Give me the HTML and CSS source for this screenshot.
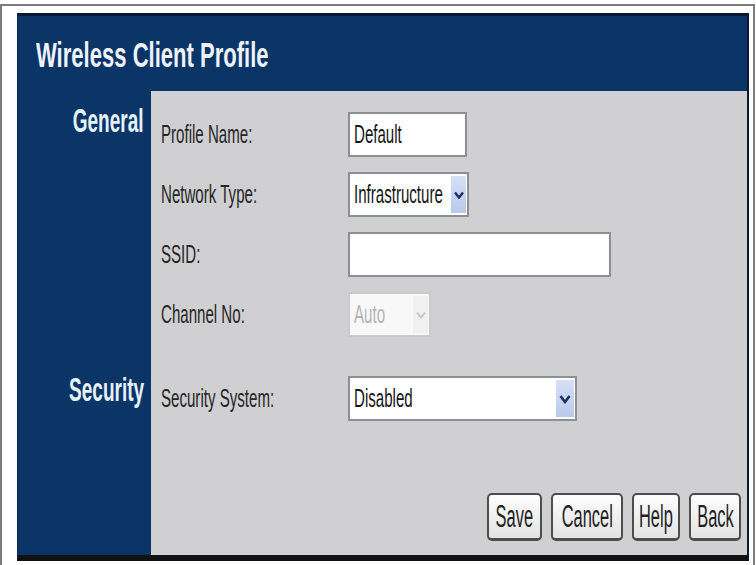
FILE: index.html
```html
<!DOCTYPE html>
<html lang="en">
<head>
    <meta charset="UTF-8">
    <meta name="viewport" content="width=device-width, initial-scale=1.0">
    <title>Wireless Client Profile</title>
    <link rel="stylesheet" href="styles.css">
</head>
<body>

    <div class="frame">
        <div class="panel">
            <div class="title"><span>Wireless Client Profile</span></div>

            <!-- Profile settings -->
            <div class="section general">
                <div class="side-head"><span>General</span></div>
                <div class="group">
                    <div class="row">
                        <div class="label"><span>Profile Name:</span></div>
                        <div class="field w-name"><span>Default</span></div>
                    </div>
                    <div class="row">
                        <div class="label"><span>Network Type:</span></div>
                        <div class="field select w-type">
                            <span>Infrastructure</span>
                            <div class="chev">
                                <svg width="10" height="8" viewBox="0 0 10 8"><polyline points="1,1.5 5,6.5 9,1.5" fill="none" stroke="#1d2f63" stroke-width="2.4"/></svg>
                            </div>
                        </div>
                    </div>
                    <div class="row">
                        <div class="label"><span>SSID:</span></div>
                        <div class="field w-ssid"></div>
                    </div>
                    <div class="row">
                        <div class="label"><span>Channel No:</span></div>
                        <div class="field select disabled w-channel">
                            <span>Auto</span>
                            <div class="chev">
                                <svg width="10" height="8" viewBox="0 0 10 8"><polyline points="1,1.5 5,6.5 9,1.5" fill="none" stroke="#c4c4c4" stroke-width="2"/></svg>
                            </div>
                        </div>
                    </div>
                </div>
            </div>

            <!-- Security settings and actions -->
            <div class="section security">
                <div class="side-head"><span>Security</span></div>
                <div class="group">
                    <div class="row">
                        <div class="label"><span>Security System:</span></div>
                        <div class="field select w-sec">
                            <span>Disabled</span>
                            <div class="chev wide">
                                <svg width="12" height="10" viewBox="0 0 12 10"><polyline points="1.5,2 6,8 10.5,2" fill="none" stroke="#1d2f63" stroke-width="2.6"/></svg>
                            </div>
                        </div>
                    </div>
                    <div class="buttons">
                        <button class="btn w-save"><span>Save</span></button>
                        <button class="btn w-cancel"><span>Cancel</span></button>
                        <button class="btn w-help"><span>Help</span></button>
                        <button class="btn w-back"><span>Back</span></button>
                    </div>
                </div>
            </div>
        </div>
    </div>

</body>
</html>
```

FILE: styles.css
```css
/* Page */
body {
    margin: 0;
    background-color: #fff;
    font-family: "Liberation Sans", Arial, sans-serif;
}

.frame {
    margin-top: 4px;
    width: 751px;
    height: 559px;
    border: 2px solid #7c7c7c;
    border-bottom: none;
    overflow: hidden;
}

/* Blue panel */
.panel {
    margin: 7px 0 0 15px;
    width: 729px;
    background-color: #0b3467;
    border-style: solid;
    border-color: #061a36 #0a1a30 #111 #0a2a55;
    border-width: 3px 2px 6px 1px;
}

/* narrow text, the whole form uses a condensed face */
.title span,
.side-head span,
.label span,
.field span,
.btn span {
    display: inline-block;
    white-space: nowrap;
}

.title {
    height: 75px;
    box-sizing: border-box;
    padding: 19px 0 0 18px;
    color: #eef3fa;
    font-size: 35px;
    font-weight: bold;
}

.title span {
    transform: scaleX(0.63);
    transform-origin: left center;
}

/* Sections */
.section {
    display: flex;
}

.side-head {
    width: 133px;
    flex: none;
    box-sizing: border-box;
    padding: 10px 7px 0 0;
    display: flex;
    justify-content: flex-end;
    align-items: flex-start;
    color: #e4f2fa;
    font-size: 34px;
    font-weight: bold;
}

.side-head span {
    flex: none;
    transform: scaleX(0.56);
    transform-origin: right center;
}

.group {
    flex: 1;
    background-color: #d0d0d2;
}

.general .group {
    padding: 21px 0 23px 10px;
    display: flex;
    flex-direction: column;
    gap: 15px;
}

.security .group {
    padding: 16px 6px 14px 10px;
}

/* Form rows */
.row {
    display: flex;
    align-items: center;
    height: 45px;
}

.label {
    width: 187px;
    flex: none;
    font-size: 26px;
    color: #262626;
}

.label span {
    transform: scaleX(0.58);
    transform-origin: left center;
}

.field {
    box-sizing: border-box;
    height: 45px;
    display: flex;
    align-items: center;
    padding-left: 4px;
    background-color: #fff;
    border: 2px solid #8b9191;
    font-size: 26px;
    color: #151515;
}

.field span {
    flex: 1 1 0;
    min-width: 0;
    transform: scaleX(0.58);
    transform-origin: left center;
}

.w-name { width: 119px; }
.w-type { width: 121px; }
.w-ssid { width: 263px; }
.w-channel { width: 83px; }
.w-sec { width: 229px; }

.chev {
    flex: none;
    align-self: stretch;
    width: 15px;
    margin: 2px 1px 2px 0;
    display: flex;
    align-items: center;
    justify-content: center;
    background: linear-gradient(#d6e0f6, #b9c8ec);
}

.chev.wide {
    width: 18px;
}

.field.disabled {
    background-color: #f8f8f8;
    border-color: #c9cbcb;
    color: #b4b4b4;
}

.field.disabled .chev {
    background: #f0f0f0;
}

/* Action buttons */
.buttons {
    display: flex;
    justify-content: flex-end;
    gap: 9px;
    margin-top: 72px;
}

.btn {
    height: 48px;
    box-sizing: border-box;
    padding: 0;
    display: flex;
    align-items: center;
    justify-content: center;
    border: 2px solid #4d4d4d;
    border-bottom-width: 3px;
    border-radius: 5px;
    background: linear-gradient(#fdfdfd, #e3e3e3);
    font-family: "Liberation Sans", Arial, sans-serif;
    font-size: 31px;
    color: #222;
    cursor: pointer;
}

.btn span {
    flex: none;
    transform: scaleX(0.53);
    transform-origin: center center;
}

.w-save { width: 55px; }
.w-cancel { width: 72px; }
.w-help { width: 48px; }
.w-back { width: 52px; }
```
